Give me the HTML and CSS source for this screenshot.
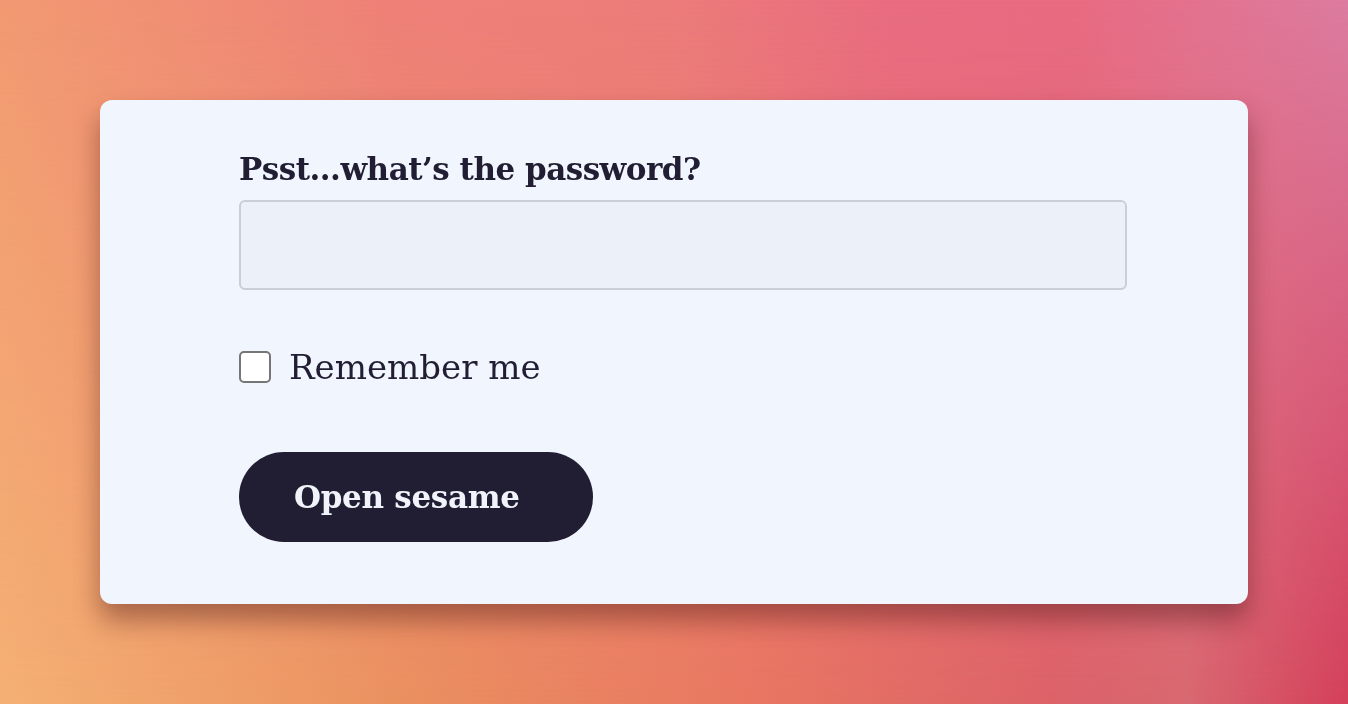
FILE: index.html
```html
<!DOCTYPE html>
<html lang="en">
<head>
  <meta charset="UTF-8" />
  <meta name="viewport" content="width=device-width, initial-scale=1.0"/>
  <title>Psst</title>
  <link rel="stylesheet" href="styles.css">
</head>
<body>

  <form class="card" onsubmit="return false">
    <label class="field-label" for="password">Psst...what’s the password?</label>
    <input class="field-input" id="password" type="password" />

    <label class="remember">
      <input class="remember-box" type="checkbox" />
      <span>Remember me</span>
    </label>

    <button class="submit-btn" type="submit">Open sesame</button>
  </form>

</body>
</html>
```

FILE: styles.css
```css
body {
  font-family: 'DejaVu Serif', serif;
  margin: 0;
  min-height: 100vh;
  color: #211d33;
  background: linear-gradient(to right, #f29a72 0%, #ee8078 30%, #ec7c7a 50%, #e96c80 66%, #e86b82 80%, #dc7ca0 100%);
}

/* warmer bottom half of the backdrop */
body::before {
  content: "";
  position: fixed;
  inset: 0;
  z-index: -1;
  background: linear-gradient(to right, #f4b074 0%, #ea9060 30%, #e87662 56%, #dc6268 78%, #d86870 88%, #d4405a 100%);
  -webkit-mask-image: linear-gradient(to bottom, transparent 0%, #000 100%);
  mask-image: linear-gradient(to bottom, transparent 0%, #000 100%);
}

.card {
  box-sizing: border-box;
  width: 1148px;
  margin: 100px 0 0 100px;
  padding: 49px 121px 62px 139px;
  background: #f0f5fe;
  border-radius: 12px;
  box-shadow: 0 16px 26px rgba(70, 20, 20, 0.42);
  display: flex;
  flex-direction: column;
  align-items: flex-start;
}

.field-label {
  font-size: 31px;
  font-weight: bold;
  letter-spacing: -0.5px;
  line-height: 40px;
}

.field-input {
  box-sizing: border-box;
  width: 100%;
  height: 90px;
  margin-top: 11px;
  padding: 0 20px;
  font: inherit;
  font-size: 30px;
  background: #ebf0f9;
  border: 2px solid #c9ced9;
  border-radius: 6px;
  outline: none;
}

.remember {
  display: flex;
  align-items: center;
  gap: 18px;
  margin-top: 57px;
  font-size: 34px;
  line-height: 40px;
}

.remember-box {
  appearance: none;
  -webkit-appearance: none;
  box-sizing: border-box;
  width: 32px;
  height: 32px;
  margin: 0;
  background: #fff;
  border: 2px solid #767676;
  border-radius: 5px;
}

.submit-btn {
  box-sizing: border-box;
  width: 354px;
  height: 90px;
  margin-top: 65px;
  padding: 0 0 0 55px;
  text-align: left;
  font: inherit;
  font-size: 31px;
  font-weight: bold;
  letter-spacing: -0.3px;
  color: #f0f4fa;
  background: #211d33;
  border: none;
  border-radius: 45px;
  cursor: pointer;
}
```
